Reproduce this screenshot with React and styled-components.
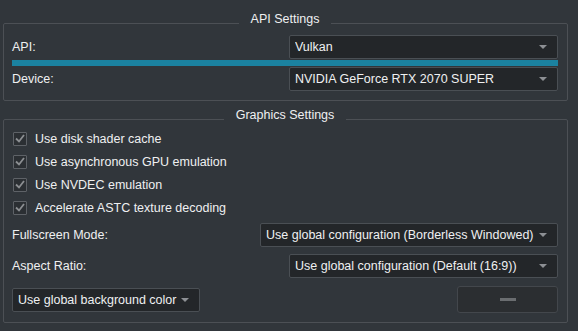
import React from 'react';
import styled, { createGlobalStyle } from 'styled-components';

const GlobalStyle = createGlobalStyle`
  html, body {
    margin: 0;
    background: #31363b;
  }
  body {
    font-family: "Liberation Sans", Arial, sans-serif;
    font-size: 12.5px;
    color: #eff0f1;
  }
`

const Page = styled.div`
  width: 578px;
  height: 331px;
  box-sizing: border-box;
  padding: 0 10px 0 3px;
  overflow: hidden;
`

const Group = styled.fieldset`
  margin: ${props => props.$top}px 0 0 0;
  padding: 0 9px ${props => props.$bottom}px 8px;
  border: 1px solid #4c5055;
  border-radius: 2px;
  min-width: 0;
`

const Title = styled.legend`
  margin: 0 auto;
  padding: 0 12px 8px;
  line-height: 14px;
  white-space: nowrap;
`

const Body = styled.div`
  margin-top: ${props => props.$offset}px;
  display: flex;
  flex-direction: column;
`

const FormRow = styled.div`
  display: flex;
  align-items: center;
  justify-content: space-between;
  height: 24px;
  margin-top: ${props => props.$gap || 0}px;
`

const Label = styled.span`
  white-space: nowrap;
`

const Highlight = styled.div`
  height: 6px;
  margin: 1px 0;
  background: #1b82a0;
`

const Combo = styled.div`
  display: flex;
  align-items: center;
  box-sizing: border-box;
  width: ${props => props.$width}px;
  height: 24px;
  padding: 0 10px 0 5px;
  background: #232629;
  border: 1px solid #4a4f54;
  border-radius: 2px;
  white-space: nowrap;
  overflow: hidden;
`

const ComboText = styled.span`
  flex: 1;
  overflow: hidden;
`

const Arrow = styled.span`
  flex: none;
  width: 0;
  height: 0;
  margin-left: 3px;
  border-left: 4px solid transparent;
  border-right: 4px solid transparent;
  border-top: 4px solid #8d9094;
`

const CheckList = styled.div`
  display: flex;
  flex-direction: column;
  padding-left: 1px;
`

const CheckRow = styled.label`
  display: flex;
  align-items: center;
  height: 23px;
  gap: 8px;
`

const Box = styled.span`
  display: flex;
  align-items: center;
  justify-content: center;
  box-sizing: border-box;
  width: 14px;
  height: 14px;
  background: #2b2f33;
  border: 1px solid #5e6267;
  border-radius: 1px;
`

const BottomRow = styled.div`
  display: flex;
  align-items: center;
  justify-content: space-between;
  margin-top: 8px;
`

const ColorButton = styled.div`
  display: flex;
  align-items: center;
  justify-content: center;
  box-sizing: border-box;
  width: 101px;
  height: 27px;
  background: #2b2e31;
  border: 1px solid #43474c;
  border-radius: 3px;
`

const Dash = styled.span`
  width: 16px;
  height: 3px;
  background: #6a6d70;
`

function Select({ value, width }) {
  return (
    <Combo $width={width}>
      <ComboText>{value}</ComboText>
      <Arrow />
    </Combo>
  );
}

function Check({ text }) {
  return (
    <CheckRow>
      <Box>
        <svg width="10" height="9" viewBox="0 0 10 9">
          <polyline points="1,4.5 4,7.5 9,1" fill="none" stroke="#8c8f92" strokeWidth="1.8" />
        </svg>
      </Box>
      {text}
    </CheckRow>
  );
}

const checks = [
  'Use disk shader cache',
  'Use asynchronous GPU emulation',
  'Use NVDEC emulation',
  'Accelerate ASTC texture decoding',
];

export default function App() {
  return (
    <Page>
      <GlobalStyle />
      <Group $top={12} $bottom={9}>
        <Title>API Settings</Title>
        <Body $offset={1}>
          <FormRow>
            <Label>API:</Label>
            <Select value="Vulkan" width={269} />
          </FormRow>
          <Highlight />
          <FormRow>
            <Label>Device:</Label>
            <Select value="NVIDIA GeForce RTX 2070 SUPER" width={269} />
          </FormRow>
        </Body>
      </Group>
      <Group $top={7} $bottom={9}>
        <Title>Graphics Settings</Title>
        <Body $offset={-3}>
          <CheckList>
            {checks.map(c => <Check key={c} text={c} />)}
          </CheckList>
          <FormRow $gap={4}>
            <Label>Fullscreen Mode:</Label>
            <Select value="Use global configuration (Borderless Windowed)" width={298} />
          </FormRow>
          <FormRow $gap={7}>
            <Label>Aspect Ratio:</Label>
            <Select value="Use global configuration (Default (16:9))" width={269} />
          </FormRow>
          <BottomRow>
            <Select value="Use global background color" width={188} />
            <ColorButton>
              <Dash />
            </ColorButton>
          </BottomRow>
        </Body>
      </Group>
    </Page>
  );
}
